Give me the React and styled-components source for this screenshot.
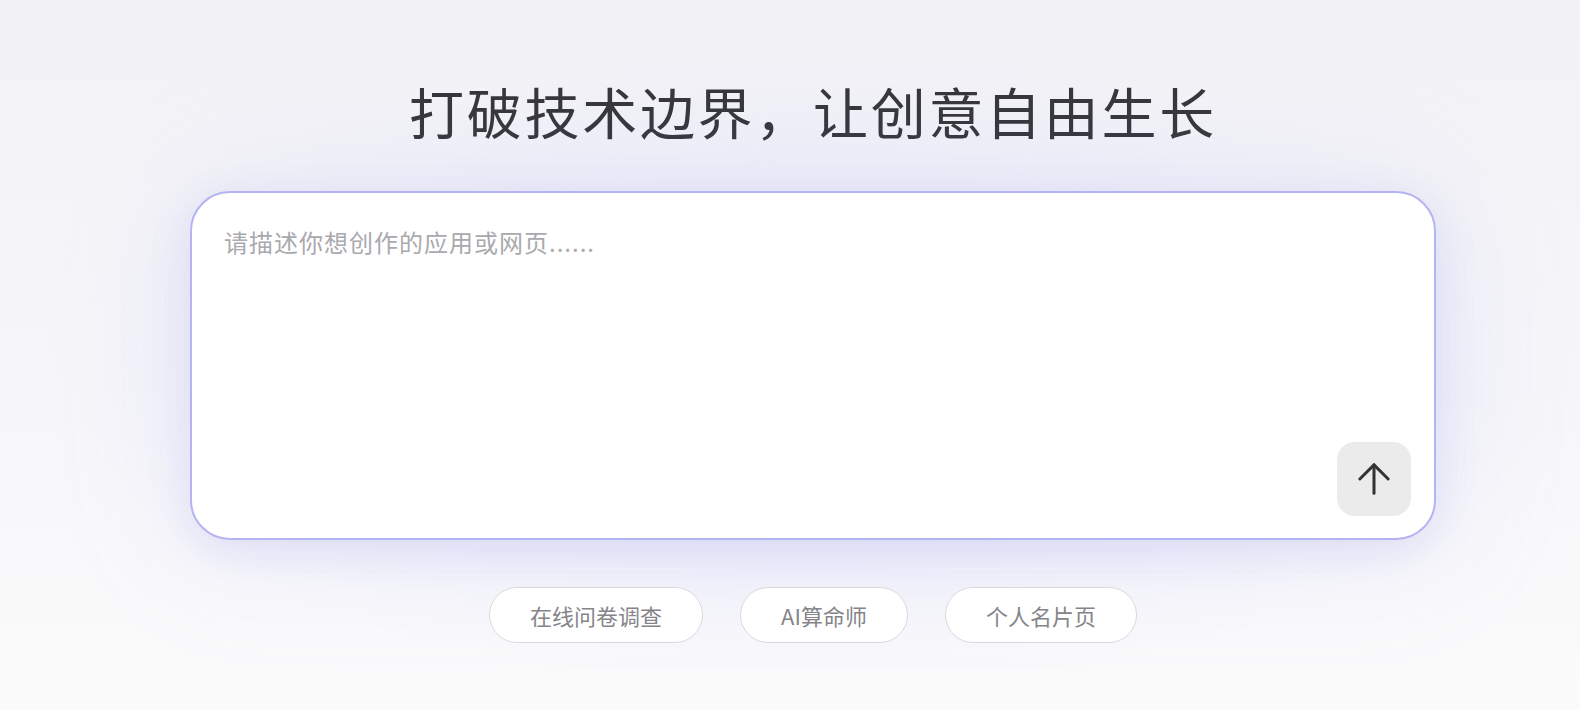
import styled, { createGlobalStyle } from "styled-components";

const GlobalStyle = createGlobalStyle`
  html, body {
    margin: 0;
    padding: 0;
  }
  body {
    font-family: "Noto Sans CJK SC", "Noto Sans", sans-serif;
    background: #f7f7fa;
  }
`;

const Page = styled.div`
  width: 100%;
  height: 710px;
  overflow: hidden;
  box-sizing: border-box;
  padding: 72px 144px 0 190px; /* content sits a bit right of centre */
  display: flex;
  flex-direction: column;
  align-items: center;
  background:
    radial-gradient(ellipse 780px 320px at 813px 365px, rgba(224, 224, 250, 0.9), rgba(234, 234, 250, 0.45) 60%, rgba(248, 248, 252, 0) 100%),
    linear-gradient(180deg, #f2f2f6 0%, #f6f6f9 50%, #fbfbfc 100%);
`;

const Title = styled.h1`
  margin: 0;
  font-size: 55px;
  font-weight: 400;
  line-height: 76px;
  letter-spacing: 2.7px;
  color: #36363b;
`;

const Composer = styled.div`
  margin-top: 43px;
  width: 1246px;
  height: 349px;
  box-sizing: border-box;
  border: 2px solid #b4b4f3;
  border-radius: 40px;
  background: #fff;
  box-shadow: 0 12px 40px rgba(140, 140, 235, 0.18), 0 0 120px 30px rgba(160, 160, 240, 0.09);
  padding: 31px 23px 22px 32px;
  display: flex;
  flex-direction: column;
`;

const Prompt = styled.textarea`
  flex: 1;
  border: none;
  outline: none;
  resize: none;
  padding: 0;
  margin: 0;
  background: transparent;
  font-family: "Noto Sans CJK SC", "Noto Sans", sans-serif;
  font-size: 24px;
  line-height: 36px;
  letter-spacing: 1px;
  color: #333;

  &::placeholder {
    color: #a9a9ae;
  }
`;

const Footer = styled.div`
  display: flex;
  justify-content: flex-end;
`;

const SendButton = styled.button`
  width: 74px;
  height: 74px;
  border: none;
  border-radius: 18px;
  background: #ebebeb;
  color: #333336;
  display: flex;
  align-items: center;
  justify-content: center;
  cursor: pointer;
  padding: 0;
`;

const Suggestions = styled.div`
  margin-top: 47px;
  display: flex;
  gap: 37px;
`;

const Chip = styled.button`
  height: 56px;
  padding: 0 40px;
  border: 1px solid #d9d9dd;
  border-radius: 28px;
  background: #fff;
  font-family: "Noto Sans CJK SC", "Noto Sans", sans-serif;
  font-size: 22px;
  color: #858589;
  cursor: pointer;
`;

const ArrowUp = () => (
  <svg width="40" height="40" viewBox="0 0 24 24" fill="none" stroke="currentColor" strokeWidth="1.8" strokeLinecap="round" strokeLinejoin="round">
    <path d="M12 20.5V3.5" />
    <path d="M3.5 12 12 3.5l8.5 8.5" />
  </svg>
);

const suggestions = ["在线问卷调查", "AI算命师", "个人名片页"];

export default function App() {
  return (
    <>
      <GlobalStyle />
      <Page>
        <Title>打破技术边界，让创意自由生长</Title>
        <Composer>
          <Prompt placeholder="请描述你想创作的应用或网页......" />
          <Footer>
            <SendButton aria-label="发送">
              <ArrowUp />
            </SendButton>
          </Footer>
        </Composer>
        <Suggestions>
          {suggestions.map((s) => (
            <Chip key={s}>{s}</Chip>
          ))}
        </Suggestions>
      </Page>
    </>
  );
}
